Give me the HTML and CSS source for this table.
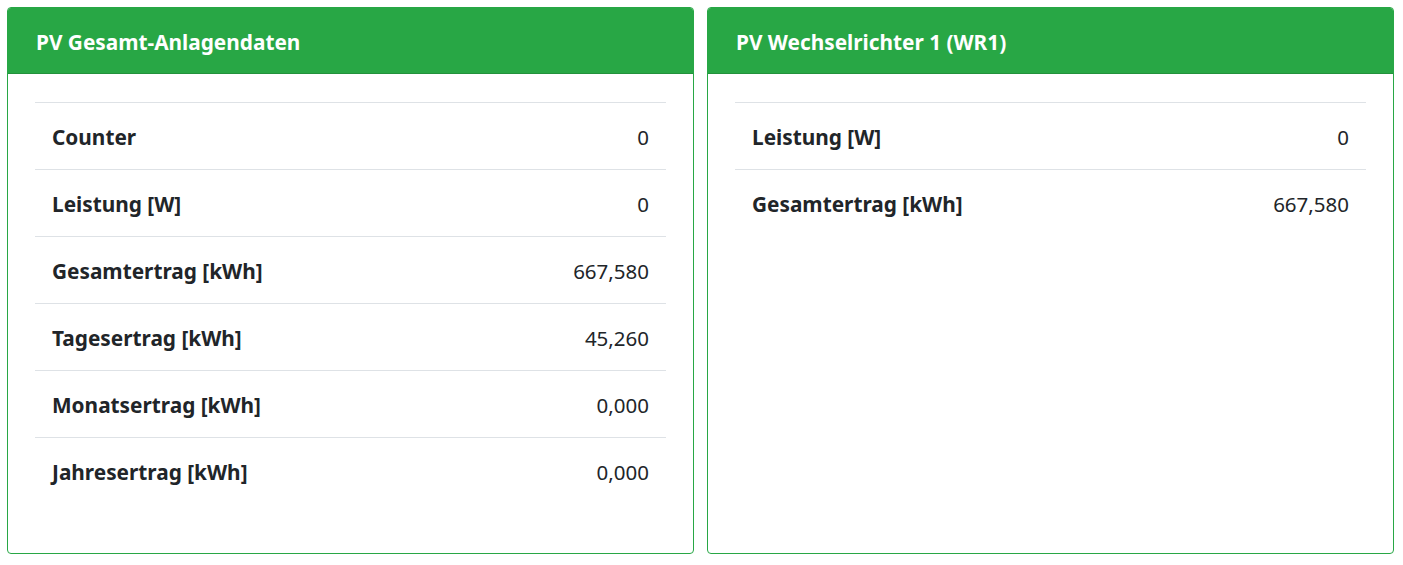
FILE: index.html
```html
<!DOCTYPE html>
<html lang="de">
<head>
<meta charset="utf-8">
<title>PV Anlagendaten</title>
<link rel="stylesheet" href="styles.css">
</head>
<body>
<div class="deck">
  <section class="card">
    <header class="card-header">PV Gesamt-Anlagendaten</header>
    <div class="card-body">
      <table class="data">
        <tr><th>Counter</th><td>0</td></tr>
        <tr><th>Leistung [W]</th><td>0</td></tr>
        <tr><th>Gesamtertrag [kWh]</th><td>667,580</td></tr>
        <tr><th>Tagesertrag [kWh]</th><td>45,260</td></tr>
        <tr><th>Monatsertrag [kWh]</th><td>0,000</td></tr>
        <tr><th>Jahresertrag [kWh]</th><td>0,000</td></tr>
      </table>
    </div>
  </section>
  <section class="card">
    <header class="card-header">PV Wechselrichter 1 (WR1)</header>
    <div class="card-body">
      <table class="data">
        <tr><th>Leistung [W]</th><td>0</td></tr>
        <tr><th>Gesamtertrag [kWh]</th><td>667,580</td></tr>
      </table>
    </div>
  </section>
</div>
</body>
</html>
```
FILE: styles.css
```css
html, body {
  margin: 0;
  padding: 0;
  background: #fff;
}
body {
  font-family: "Noto Sans", "Open Sans", sans-serif;
  font-size: 20px;
  color: #212529;
}
.deck {
  display: flex;
  gap: 13px;
  padding: 7px 9px 0 7px;
  height: 554px;
  box-sizing: border-box;
}
.card {
  flex: 1 1 0;
  border: 1px solid #28a745;
  border-radius: 4px;
  overflow: hidden;
  display: flex;
  flex-direction: column;
}
.card-header {
  background: #28a745;
  color: #fff;
  font-weight: 700;
  font-size: 20.8px;
  line-height: 30px;
  padding: 19px 28px 16px 28px;
  border-bottom: 1px solid #23913c;
}
.card-body {
  padding: 28px 27px 28px 27px;
}
.data {
  width: 100%;
  border-collapse: collapse;
}
.data th, .data td {
  border-top: 1px solid #dee2e6;
  padding: 19px 17px 17px 17px;
  line-height: 30px;
  vertical-align: top;
}
.data th {
  text-align: left;
  font-weight: 700;
  font-size: 20.8px;
}
.data td {
  text-align: right;
  font-weight: 400;
  font-size: 20.5px;
}
```
